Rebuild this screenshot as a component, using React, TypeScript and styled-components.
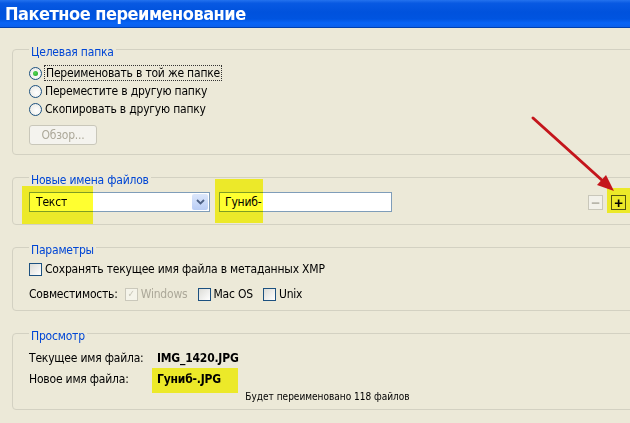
import styled, { createGlobalStyle } from 'styled-components';

const GlobalStyle = createGlobalStyle`
  html, body {
    margin: 0;
    padding: 0;
    background: #ece9d8;
  }
  body {
    font-family: "DejaVu Sans Condensed", "Liberation Sans", sans-serif;
    font-size: 12px;
    letter-spacing: -0.2px;
    color: #000;
  }
`;

export default function App() {
  return (
    <>
      <GlobalStyle />
      <Page>
        <TitleBar>Пакетное переименование</TitleBar>
        <Content>
          <Group>
            <Legend>Целевая папка</Legend>
            <OptionRow>
              <Radio $checked />
              <FocusLabel>Переименовать в той же папке</FocusLabel>
            </OptionRow>
            <OptionRow>
              <Radio />
              <span>Переместите в другую папку</span>
            </OptionRow>
            <OptionRow>
              <Radio />
              <span>Скопировать в другую папку</span>
            </OptionRow>
            <BrowseButton>Обзор...</BrowseButton>
          </Group>

          <Group $pb={12}>
            <Legend>Новые имена файлов</Legend>
            <NamesRow>
              <Marked>
                <Combo>
                  <ComboText>Текст</ComboText>
                  <ComboArrow>
                    <svg width="9" height="6" viewBox="0 0 9 6">
                      <path d="M1 1 L4.5 4.5 L8 1" fill="none" stroke="#4d6185" strokeWidth="1.8" />
                    </svg>
                  </ComboArrow>
                </Combo>
                <Highlight style={{ left: -7, top: -6, width: 71, height: 38 }} />
              </Marked>
              <Marked>
                <TextInput>Гуниб-</TextInput>
                <Highlight style={{ left: -4, top: -13, width: 48, height: 44 }} />
              </Marked>
              <PlusMinus>
                <SmallButton $disabled>−</SmallButton>
                <Marked>
                  <SmallButton>+</SmallButton>
                  <Highlight style={{ left: -4, top: -7, width: 23, height: 25 }} />
                </Marked>
              </PlusMinus>
            </NamesRow>
          </Group>

          <Group $pb={7}>
            <Legend>Параметры</Legend>
            <OptionRow $mt={3}>
              <Check />
              <span>Сохранять текущее имя файла в метаданных XMP</span>
            </OptionRow>
            <CompatRow>
              <span>Совместимость:</span>
              <CheckItem $disabled>
                <Check $checked $disabled />
                <span>Windows</span>
              </CheckItem>
              <CheckItem>
                <Check />
                <span>Mac OS</span>
              </CheckItem>
              <CheckItem>
                <Check />
                <span>Unix</span>
              </CheckItem>
            </CompatRow>
          </Group>

          <Group $pb={5}>
            <Legend>Просмотр</Legend>
            <PreviewRow $mt={6}>
              <PreviewLabel>Текущее имя файла:</PreviewLabel>
              <PreviewValue>IMG_1420.JPG</PreviewValue>
            </PreviewRow>
            <PreviewRow $mt={3}>
              <PreviewLabel>Новое имя файла:</PreviewLabel>
              <Marked>
                <PreviewValue>Гуниб-.JPG</PreviewValue>
                <Highlight style={{ left: -5, top: -4, width: 86, height: 25 }} />
              </Marked>
            </PreviewRow>
            <Summary>Будет переименовано 118 файлов</Summary>
          </Group>
        </Content>

        <Arrow width="630" height="423" viewBox="0 0 630 423">
          <line x1="533" y1="118" x2="604" y2="182" stroke="#c4161c" strokeWidth="3" strokeLinecap="round" />
          <polygon points="614,191 597,185 606,175" fill="#c4161c" />
        </Arrow>
      </Page>
    </>
  );
}

const Page = styled.div`
  position: relative;
  width: 630px;
  height: 423px;
  overflow: hidden;
  background: #ece9d8;
`;

const TitleBar = styled.div`
  height: 27px;
  padding-left: 5px;
  display: flex;
  align-items: center;
  color: #fff;
  font-size: 18px;
  font-weight: bold;
  letter-spacing: -0.5px;
  background: linear-gradient(
    to bottom,
    #2472ee 0%,
    #0859e2 12%,
    #0052dd 45%,
    #0054e0 70%,
    #0864f6 85%,
    #0a60ec 100%
  );
  border-bottom: 1px solid #0040b0;
`;

const Content = styled.div`
  display: flex;
  flex-direction: column;
  gap: 12px;
  padding: 11px 0 0 12px;
  width: 628px;
`;

const Group = styled.fieldset<{ $pb?: number }>`
  margin: 0;
  padding: 0 13px ${(p) => p.$pb ?? 9}px 16px;
  min-width: 0;
  border: 1px solid #d3d1c2;
  border-radius: 4px;
  display: flex;
  flex-direction: column;
`;

const Legend = styled.legend`
  padding: 6px 2px 0 2px;
  margin-left: 0;
  line-height: 14px;
  color: #0046d5;
`;

const OptionRow = styled.div<{ $mt?: number }>`
  display: flex;
  align-items: center;
  gap: 3px;
  height: 18px;
  margin-top: ${(p) => p.$mt ?? 0}px;
  &:first-of-type {
    margin-top: ${(p) => p.$mt ?? 5}px;
  }
`;

const FocusLabel = styled.span`
  outline: 1px dotted #333;
  outline-offset: 0;
  padding: 0 1px;
`;

const Radio = styled.span<{ $checked?: boolean }>`
  width: 11px;
  height: 11px;
  border-radius: 50%;
  border: 1px solid #1c5180;
  background: radial-gradient(circle at 60% 60%, #fff 0%, #e6e6e0 100%);
  display: inline-flex;
  align-items: center;
  justify-content: center;
  flex-shrink: 0;
  &::after {
    content: '';
    width: 5px;
    height: 5px;
    border-radius: 50%;
    background: ${(p) => (p.$checked ? 'radial-gradient(circle at 40% 40%, #55d855, #21a121)' : 'transparent')};
  }
`;

const Check = styled.span<{ $checked?: boolean; $disabled?: boolean }>`
  width: 11px;
  height: 11px;
  border: 1px solid ${(p) => (p.$disabled ? '#cac8bb' : '#1c5180')};
  background: ${(p) => (p.$disabled ? '#f5f4ea' : 'linear-gradient(135deg, #dcdcd7 0%, #fff 100%)')};
  display: inline-flex;
  align-items: center;
  justify-content: center;
  flex-shrink: 0;
  &::after {
    content: ${(p) => (p.$checked ? "'✓'" : "''")};
    font-size: 10px;
    line-height: 10px;
    color: #c8c6b8;
    font-weight: bold;
  }
`;

const BrowseButton = styled.button`
  margin-top: 7px;
  align-self: flex-start;
  width: 68px;
  height: 20px;
  padding: 0;
  font: inherit;
  letter-spacing: inherit;
  color: #aca899;
  background: #f4f3ee;
  border: 1px solid #c9c7ba;
  border-radius: 3px;
`;

const NamesRow = styled.div`
  display: flex;
  align-items: center;
  gap: 9px;
  margin-top: 5px;
`;

const Marked = styled.span`
  position: relative;
  display: inline-flex;
`;

const Highlight = styled.span`
  position: absolute;
  background: #ffff30;
  mix-blend-mode: multiply;
  pointer-events: none;
`;

const Combo = styled.div`
  width: 179px;
  height: 18px;
  border: 1px solid #7f9db9;
  background: #fff;
  display: flex;
  align-items: center;
`;

const ComboText = styled.span`
  flex: 1;
  padding-left: 6px;
`;

const ComboArrow = styled.span`
  width: 16px;
  height: 16px;
  margin-right: 1px;
  border-radius: 2px;
  background: linear-gradient(to bottom, #dce7fb, #b9cdf5);
  display: flex;
  align-items: center;
  justify-content: center;
`;

const TextInput = styled.div`
  width: 166px;
  height: 18px;
  padding-left: 5px;
  border: 1px solid #7f9db9;
  background: #fff;
  display: flex;
  align-items: center;
`;

const PlusMinus = styled.div`
  margin-left: auto;
  display: flex;
  gap: 8px;
  align-items: center;
`;

const SmallButton = styled.span<{ $disabled?: boolean }>`
  width: 13px;
  height: 13px;
  border: 1px solid ${(p) => (p.$disabled ? '#c9c7ba' : '#555')};
  background: ${(p) => (p.$disabled ? '#f2f1ea' : 'transparent')};
  color: ${(p) => (p.$disabled ? '#b5b3a8' : '#000')};
  display: flex;
  align-items: center;
  justify-content: center;
  font-size: 15px;
  line-height: 13px;
  font-weight: bold;
  font-family: "Liberation Sans", sans-serif;
`;

const CompatRow = styled.div`
  display: flex;
  align-items: center;
  height: 18px;
  margin-top: 7px;
  gap: 7px;
`;

const CheckItem = styled.span<{ $disabled?: boolean }>`
  display: inline-flex;
  align-items: center;
  gap: 3px;
  margin-right: 3px;
  color: ${(p) => (p.$disabled ? '#aca899' : '#000')};
`;

const PreviewRow = styled.div<{ $mt?: number }>`
  display: flex;
  align-items: center;
  height: 18px;
  margin-top: ${(p) => p.$mt ?? 0}px;
`;

const PreviewLabel = styled.span`
  width: 128px;
`;

const PreviewValue = styled.span`
  font-weight: bold;
`;

const Summary = styled.div`
  margin-top: 2px;
  text-align: center;
  font-size: 10px;
  line-height: 14px;
  letter-spacing: 0;
`;

const Arrow = styled.svg`
  position: absolute;
  left: 0;
  top: 0;
  pointer-events: none;
`;
